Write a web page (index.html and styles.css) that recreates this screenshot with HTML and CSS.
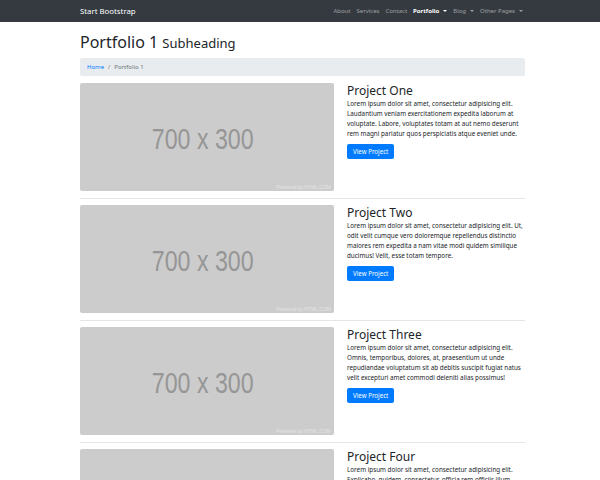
FILE: index.html
```html
<!DOCTYPE html>
<html>
<head>
<meta charset="utf-8">
<link rel="stylesheet" href="styles.css">
</head>
<body>
<nav class="navbar">
  <div class="container nav-inner">
    <a class="brand">Start Bootstrap</a>
    <ul class="nav-links">
      <li>About</li>
      <li>Services</li>
      <li>Contact</li>
      <li class="active dropdown">Portfolio</li>
      <li class="dropdown">Blog</li>
      <li class="dropdown">Other Pages</li>
    </ul>
  </div>
</nav>
<main class="container">
  <h1 class="page-title">Portfolio 1 <small>Subheading</small></h1>
  <ol class="breadcrumb">
    <li class="crumb-link">Home</li>
    <li class="sep">/</li>
    <li class="crumb-current">Portfolio 1</li>
  </ol>

  <div class="project">
    <div class="thumb"><span class="thumb-label">700 x 300</span><span class="powered">Powered by HTML.COM</span></div>
    <div class="info">
      <h3>Project One</h3>
      <p>Lorem ipsum dolor sit amet, consectetur adipisicing elit. Laudantium veniam exercitationem expedita laborum at voluptate. Labore, voluptates totam at aut nemo deserunt rem magni pariatur quos perspiciatis atque eveniet unde.</p>
      <a class="btn">View Project</a>
    </div>
  </div>
  <hr>
  <div class="project">
    <div class="thumb"><span class="thumb-label">700 x 300</span><span class="powered">Powered by HTML.COM</span></div>
    <div class="info">
      <h3>Project Two</h3>
      <p>Lorem ipsum dolor sit amet, consectetur adipisicing elit. Ut, odit velit cumque vero doloremque repellendus distinctio maiores rem expedita a nam vitae modi quidem similique ducimus! Velit, esse totam tempore.</p>
      <a class="btn">View Project</a>
    </div>
  </div>
  <hr>
  <div class="project">
    <div class="thumb"><span class="thumb-label">700 x 300</span><span class="powered">Powered by HTML.COM</span></div>
    <div class="info">
      <h3>Project Three</h3>
      <p>Lorem ipsum dolor sit amet, consectetur adipisicing elit. Omnis, temporibus, dolores, at, praesentium ut unde repudiandae voluptatum sit ab debitis suscipit fugiat natus velit excepturi amet commodi deleniti alias possimus!</p>
      <a class="btn">View Project</a>
    </div>
  </div>
  <hr>
  <div class="project">
    <div class="thumb"><span class="thumb-label">700 x 300</span><span class="powered">Powered by HTML.COM</span></div>
    <div class="info">
      <h3>Project Four</h3>
      <p>Lorem ipsum dolor sit amet, consectetur adipisicing elit. Explicabo, quidem, consectetur, officia rem officiis illum aliquam perspiciatis aspernatur quod modi hic nemo qui soluta aut eius fugit quam in suscipit?</p>
      <a class="btn">View Project</a>
    </div>
  </div>
</main>
</body>
</html>
```
FILE: styles.css
```css
* { box-sizing: border-box; }
html, body { margin: 0; padding: 0; }
body {
  font-family: "Noto Sans", "Open Sans", sans-serif;
  color: #212529;
  background: #fff;
  overflow: hidden;
}
.container { width: 445px; margin: 0 75px 0 80px; }
.navbar { background: #343a40; height: 22px; }
.nav-inner { display: flex; align-items: center; justify-content: space-between; height: 22px; }
.brand { color: #fff; font-size: 7.8px; }
.nav-links { list-style: none; margin: 0 2px 0 0; padding: 0; display: flex; gap: 6px; font-size: 6px; color: rgba(255,255,255,0.5); }
.nav-links .active { color: #fff; font-weight: 700; }
.dropdown::after {
  content: ""; display: inline-block; margin-left: 4px; vertical-align: 1px;
  border-top: 2.5px solid; border-left: 2px solid transparent; border-right: 2px solid transparent;
}
.page-title { font-weight: 400; font-size: 16px; margin: 11px 0 5px; line-height: 19px; }
.page-title small { font-size: 13px; }
.breadcrumb { list-style: none; margin: 0 0 7px; padding: 0 7px; height: 18px; display: flex; align-items: center; gap: 4px; background: #e9ecef; border-radius: 2px; font-size: 6px; color: #6c757d; }
.crumb-link { color: #007bff; }
.project { display: grid; grid-template-columns: 254px 1fr; column-gap: 13px; }
.thumb { position: relative; height: 108px; background: #ccc; border-radius: 2px; display: flex; align-items: center; justify-content: center; }
.thumb-label { font-family: "Liberation Sans", Arial, sans-serif; font-size: 29px; color: #969696; transform: translate(-4px, 2px) scaleX(0.8); }
.powered { position: absolute; right: 3px; bottom: 1px; font-family: "Liberation Sans", Arial, sans-serif; font-size: 5px; color: #e4e4e4; }
.info { display: flex; flex-direction: column; align-items: flex-start; }
.info h3 { font-weight: 400; font-size: 12px; margin: 1px 0 0; line-height: 14px; }
.info p { font-size: 6.3px; line-height: 10px; margin: 1px 0 5px; }
.btn { display: block; background: #007bff; color: #fff; font-size: 6.2px; padding: 0 6px; height: 15px; line-height: 15px; border-radius: 2px; }
hr { border: 0; border-top: 1px solid rgba(0,0,0,0.1); margin: 7px 0 6px; }
```
